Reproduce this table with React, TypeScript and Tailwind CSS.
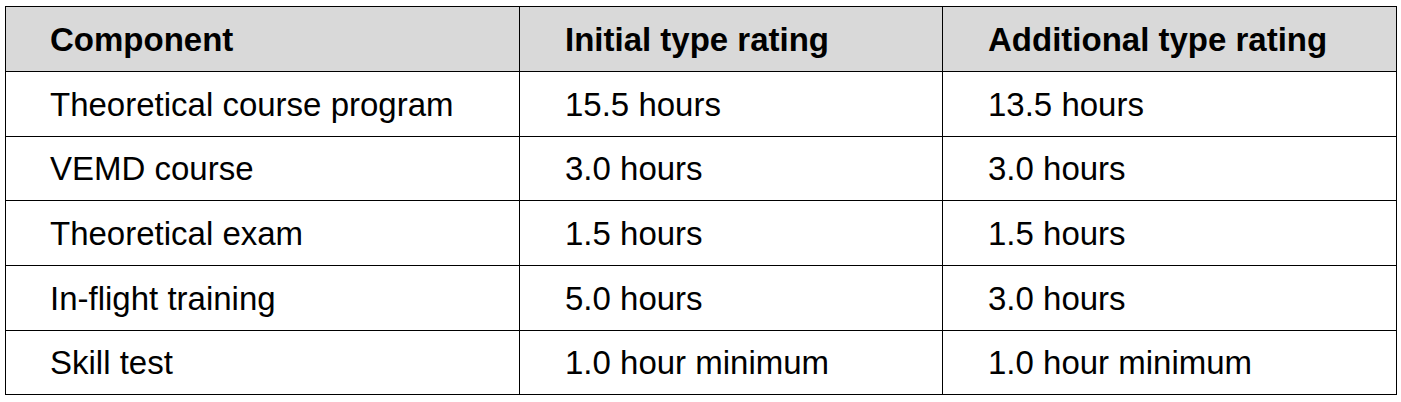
const rows: [string, string, string][] = [
  ["Theoretical course program", "15.5 hours", "13.5 hours"],
  ["VEMD course", "3.0 hours", "3.0 hours"],
  ["Theoretical exam", "1.5 hours", "1.5 hours"],
  ["In-flight training", "5.0 hours", "3.0 hours"],
  ["Skill test", "1.0 hour minimum", "1.0 hour minimum"],
];

const rowHeights = ["h-[65px]", "h-[64px]", "h-[65px]", "h-[65px]", "h-[64px]"];

export default function App() {
  return (
    <div className="min-h-[402px] w-[1401px] bg-white pl-[5px] pt-[6px] font-['Liberation_Sans',Arial,sans-serif] text-[33px] leading-none text-black">
      <table className="w-[1391px] table-fixed border-collapse">
        <colgroup>
          <col className="w-[514px]" />
          <col className="w-[423px]" />
          <col className="w-[454px]" />
        </colgroup>
        <thead>
          <tr className="h-[65px] bg-[#d9d9d9]">
            <th className="border border-black pl-[44px] text-left align-middle font-bold">Component</th>
            <th className="border border-black pl-[45px] text-left align-middle font-bold">Initial type rating</th>
            <th className="border border-black pl-[45px] text-left align-middle font-bold">Additional type rating</th>
          </tr>
        </thead>
        <tbody>
          {rows.map((row, i) => (
            <tr key={row[0]} className={rowHeights[i]}>
              <td className="border border-black pl-[44px] align-middle">{row[0]}</td>
              <td className="border border-black pl-[45px] align-middle">{row[1]}</td>
              <td className="border border-black pl-[45px] align-middle">{row[2]}</td>
            </tr>
          ))}
        </tbody>
      </table>
    </div>
  );
}
